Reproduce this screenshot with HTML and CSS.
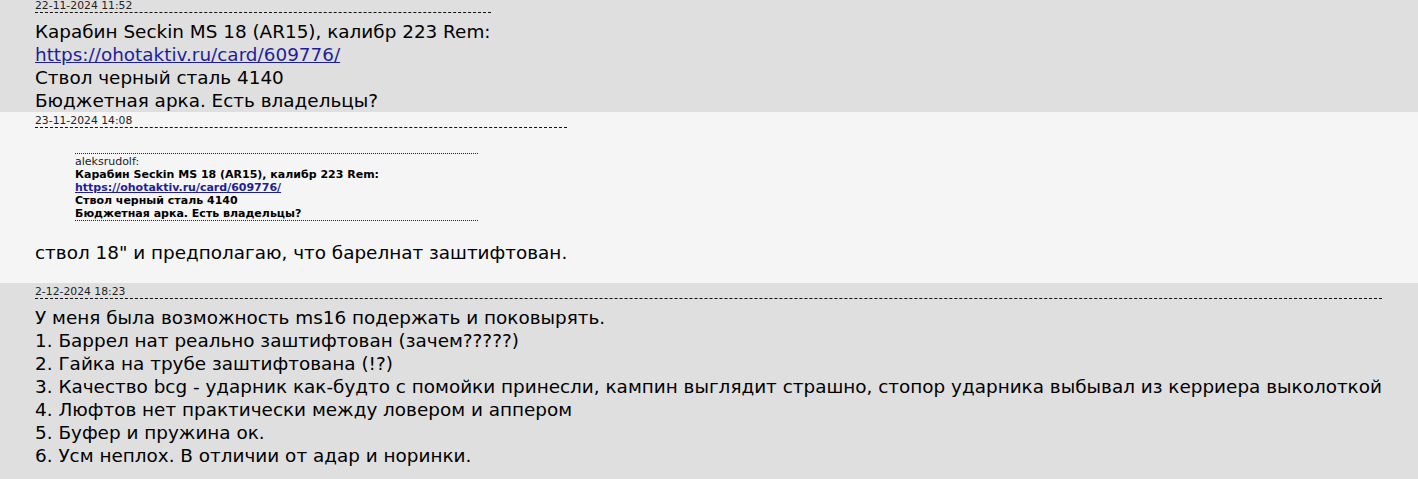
FILE: index.html
```html
<!DOCTYPE html>
<html lang="ru">
<head>
<meta charset="utf-8">
<title>Форум</title>
<link rel="stylesheet" href="styles.css">
</head>
<body>
<div class="thread">
  <div class="post post-dark">
    <div class="post-inner">
      <div class="post-date">22-11-2024 11:52</div>
      <div class="post-text">Карабин Seckin MS 18 (AR15), калибр 223 Rem:<br><a href="#">https://ohotaktiv.ru/card/609776/</a><br>Ствол черный сталь 4140<br>Бюджетная арка. Есть владельцы?</div>
    </div>
  </div>
  <div class="post post-light">
    <div class="post-inner">
      <div class="post-date">23-11-2024 14:08</div>
      <div class="quote">
        <div class="quote-author">aleksrudolf:</div>
        <div class="quote-text">Карабин Seckin MS 18 (AR15), калибр 223 Rem:<br><a href="#">https://ohotaktiv.ru/card/609776/</a><br>Ствол черный сталь 4140<br>Бюджетная арка. Есть владельцы?</div>
      </div>
      <div class="post-text post-text-tail">ствол 18" и предполагаю, что барелнат заштифтован.</div>
    </div>
  </div>
  <div class="post post-dark">
    <div class="post-inner">
      <div class="post-date">2-12-2024 18:23</div>
      <div class="post-text">У меня была возможность ms16 подержать и поковырять.<br>1. Баррел нат реально заштифтован (зачем?????)<br>2. Гайка на трубе заштифтована (!?)<br>3. Качество bcg - ударник как-будто с помойки принесли, кампин выглядит страшно, стопор ударника выбывал из керриера выколоткой<br>4. Люфтов нет практически между ловером и аппером<br>5. Буфер и пружина ок.<br>6. Усм неплох. В отличии от адар и норинки.</div>
    </div>
  </div>
</div>
</body>
</html>
```

FILE: styles.css
```css
html, body {
  margin: 0;
  padding: 0;
}
body {
  background: #dfdfdf;
  font-family: "DejaVu Sans", sans-serif;
  color: #000;
}
.thread {
  margin-top: -3px;
}
.post {
  padding: 3px 0 0 35px;
}
.post-dark {
  background: #dfdfdf;
}
.post-light {
  background: #f5f5f5;
}
.post-inner {
  display: inline-block;
}
.post-date {
  font-size: 10.8px;
  line-height: 12px;
  color: #222;
  border-bottom: 1px dashed #111;
}
.post-text {
  margin-top: 7px;
  font-size: 18.4px;
  line-height: 23px;
}
.post-text-tail {
  margin-top: 0;
  padding-bottom: 19px;
}
.post-text a,
.quote a {
  color: #1e1e9c;
  text-decoration: underline;
}
.quote {
  width: 403px;
  margin: 25px 0 20px 40px;
  padding: 1px 0 0;
  border-top: 1px dotted #1a1a6e;
  border-bottom: 1px dotted #1a1a6e;
  font-size: 11px;
  line-height: 13px;
}
.quote-author {
  color: #222;
}
.quote-text {
  font-weight: bold;
}
```
